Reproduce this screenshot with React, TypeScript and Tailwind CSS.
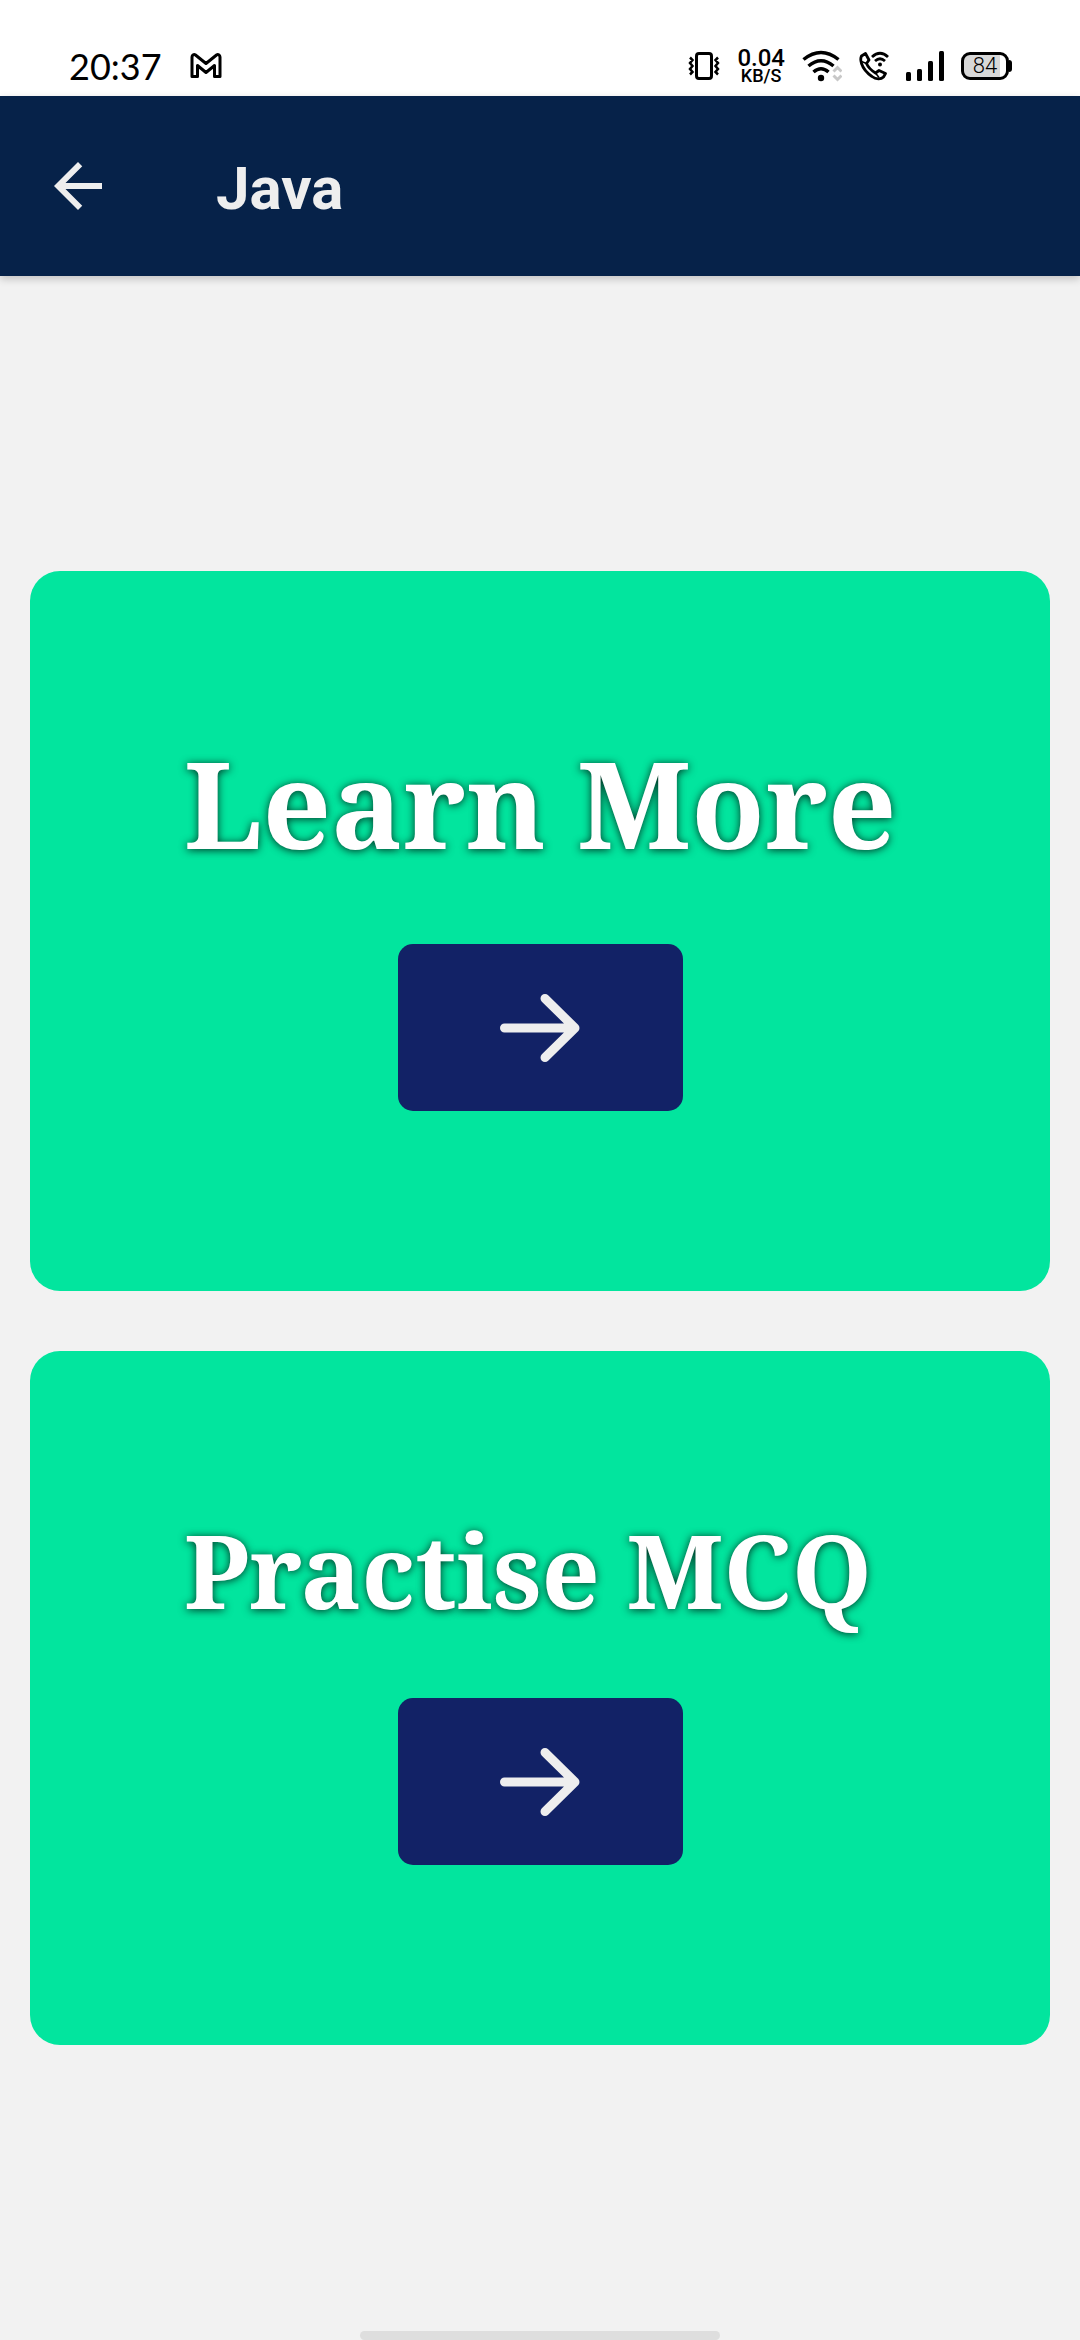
import React from "react";

function MailIcon() {
  return (
    <svg width="32" height="26" viewBox="0 0 32 26" fill="none" stroke="#000" strokeWidth="3" strokeLinejoin="round" aria-hidden="true">
      <path d="M2 23.500V4C2 1.800 4 1 5.500 2L16 10.500 26.500 2C28 1 30 1.800 30 4V23.500H24.500V12.500L16 19.500 7.500 12.500V23.500Z" />
    </svg>
  );
}

function VibrateIcon() {
  return (
    <svg width="32" height="30" viewBox="0 0 32 30" fill="none" stroke="#000" aria-hidden="true">
      <rect x="8.500" y="2.500" width="15" height="25" rx="2.500" strokeWidth="3" />
      <path d="M2 6.500L4.500 9 2 12 4.500 15 2 18 4.500 21 2 23.500M30 6.500L27.500 9 30 12 27.500 15 30 18 27.500 21 30 23.500" strokeWidth="2.500" />
    </svg>
  );
}

function WifiIcon() {
  return (
    <svg width="40" height="32" viewBox="0 0 40 32" fill="none" aria-hidden="true">
      <path d="M1.500 9.500Q19 -4.500 36.500 9.500M6.500 16Q19 5.500 31.500 16M11.500 22Q19 15.500 26.500 22" stroke="#000" strokeWidth="3.500" />
      <circle cx="19" cy="28" r="3.200" fill="#000" />
      <path d="M31.500 21.500L35.500 17.500 39.500 21.500M31.500 25.500L35.500 29.500 39.500 25.500" stroke="#c8c8c8" strokeWidth="3" />
    </svg>
  );
}

function WifiCallIcon() {
  return (
    <svg width="30" height="30" viewBox="0 0 30 30" fill="none" stroke="#000" strokeWidth="2.800" strokeLinejoin="round" aria-hidden="true">
      <path d="M2.500 5L6.500 2.500 10 9 7.500 12.500C9 16 12.500 19.500 16.500 22L20 19.500 26.500 22.500 24.500 26C22 28.500 17 28.500 13 25.500C8 22 4 17 2.500 12.500C1.500 9.500 1.500 7 2.500 5Z" />
      <path d="M16.500 22L20 26.500M7.500 12.500L2.500 10.500" strokeWidth="1.500" />
      <path d="M13 6Q21 -1.500 29 6M16 10Q21 5.500 26 10" />
      <circle cx="21" cy="13.500" r="2" fill="#000" stroke="none" />
    </svg>
  );
}

function SignalIcon() {
  return (
    <svg width="38" height="32" viewBox="0 0 38 32" fill="#000" aria-hidden="true">
      <rect x="0" y="22" width="5" height="9" rx="1.500" />
      <rect x="11" y="19" width="5" height="12" rx="1.500" />
      <rect x="22" y="11" width="5" height="20" rx="1.500" />
      <rect x="33" y="1" width="5" height="30" rx="1.500" />
    </svg>
  );
}

function Battery() {
  return (
    <div className="flex items-center">
      <div className="flex h-7 w-12 items-center justify-center rounded-[9px] border-3 border-black bg-linear-to-r from-[#d8d8d8] from-85% to-white to-85% font-[Roboto] text-[22px] leading-none font-light">
        84
      </div>
      <div className="h-3 w-[3px] rounded-r-full bg-black" />
    </div>
  );
}

function StatusBar() {
  return (
    <div className="flex h-24 items-center bg-white pt-9 pr-[68px] pl-[69px] text-black">
      <span className="font-[Lato] text-[36px] leading-none">20:37</span>
      <div className="ml-7">
        <MailIcon />
      </div>
      <div className="ml-auto flex items-center gap-[17px]">
        <VibrateIcon />
        <div className="flex flex-col items-center font-[Roboto] font-medium">
          <span className="text-[24px] leading-[20px]">0.04</span>
          <span className="text-[18px] leading-[16px]">KB/S</span>
        </div>
        <WifiIcon />
        <WifiCallIcon />
        <SignalIcon />
        <Battery />
      </div>
    </div>
  );
}

function Header({ title }: { title: string }) {
  return (
    <header className="z-10 flex h-[180px] items-center bg-[#062249] px-[42px] text-[#eeeeee] shadow-[0_3px_8px_rgba(0,0,0,0.2)]">
      <button type="button" aria-label="Back">
        <svg width="72" height="72" viewBox="0 0 24 24" fill="currentColor" aria-hidden="true">
          <path d="M20 11H7.830l5.590-5.590L12 4l-8 8 8 8 1.410-1.410L7.830 13H20v-2z" />
        </svg>
      </button>
      <h1 className="ml-[102px] pt-1.5 font-[Roboto] text-[60px] leading-[72px] font-bold">{title}</h1>
    </header>
  );
}

function ActionCard({ label, textClass }: { label: string; textClass: string }) {
  return (
    <section className="flex flex-col gap-[60px] rounded-[30px] bg-[#02e59e] px-[154px] pt-[150px] pb-[180px]">
      <h2 className={`font-['Noto_Serif','DejaVu_Serif_Condensed','DejaVu_Serif',serif] font-bold whitespace-nowrap text-white [text-shadow:0_1px_8px_rgba(0,0,0,0.8)] ${textClass}`}>
        {label}
      </h2>
      <button type="button" aria-label={label} className="flex h-[167px] w-[285px] items-center justify-center self-center rounded-[15px] bg-[#122266] text-[#eeeeee]">
        <svg width="80" height="68" viewBox="0 0 80 68" fill="none" stroke="currentColor" strokeWidth="9" strokeLinecap="round" strokeLinejoin="round" aria-hidden="true">
          <path d="M4.500 34H75M45 4.500L75 34 45 63.500" />
        </svg>
      </button>
    </section>
  );
}

export default function App() {
  return (
    <div className="relative flex min-h-screen flex-col bg-[#f2f2f2]">
      <StatusBar />
      <Header title="Java" />
      <main className="flex flex-1 flex-col justify-center gap-[60px] px-[30px]">
        <ActionCard label="Learn More" textClass="text-[120px] leading-[163px]" />
        <ActionCard label="Practise MCQ" textClass="text-[102px] leading-[137px]" />
      </main>
      <div className="absolute bottom-0 left-1/2 h-[9px] w-1/3 -translate-x-1/2 rounded-full bg-[#dedede]" />
    </div>
  );
}
